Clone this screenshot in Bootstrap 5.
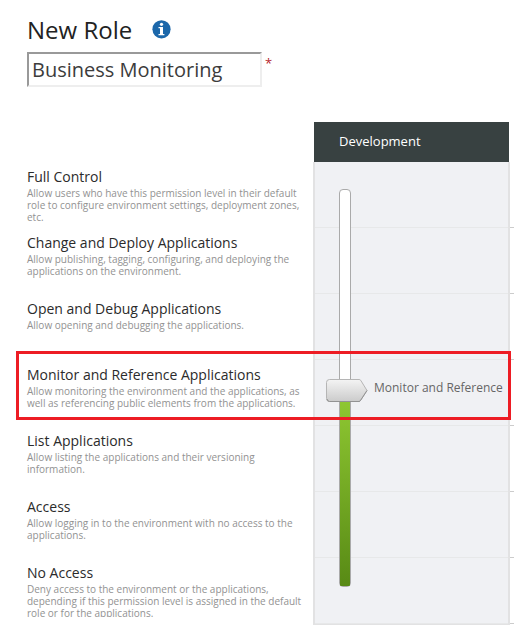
<!DOCTYPE html>
<html lang="en">
<head>
<meta charset="utf-8">
<meta name="viewport" content="width=device-width, initial-scale=1">
<title>New Role</title>
<link href="https://cdn.jsdelivr.net/npm/bootstrap@5.3.0/dist/css/bootstrap.min.css" rel="stylesheet">
<style>
body { font-family: "Open Sans", sans-serif; color: #333; width: 527px; height: 630px; overflow: hidden; }
.page-head { height: 122px; padding: 13px 0 0 27px; }
.role-title { font-size: 24px; line-height: 34px; font-weight: 400; color: #222; }
.info-icon { margin: 7px 0 0 20px; }
.name-line { margin-top: 5px; }
.role-name { width: 235px; height: 35px; border: 2px solid; border-color: #999 #eee #eee #999; border-radius: 0; padding: 0 3px; font-size: 20px; font-weight: 400; line-height: 30px; color: #3c3c3c; background: #fff; }
.required-mark { color: #b5232b; font-size: 13px; line-height: 20px; margin-left: 3px; margin-top: 1px; }
.levels { width: 313px; height: 495px; padding: 40px 0 0 27px; overflow: hidden; }
.level { height: 66px; padding-top: 5px; }
.level-name { font-size: 14px; line-height: 20px; font-weight: 400; color: #2b2b2b; }
.level-name span { display: block; height: 20px; line-height: 19px; }
.level-text { font-size: 10px; line-height: 12px; color: #929292; white-space: nowrap; }
.env { width: 201px; }
.env-head { width: 195px; height: 40px; margin-left: 1px; padding-left: 25px; background: #384141; color: #fff; font-size: 13px; line-height: 39px; }
.env-body { width: 197px; height: 463px; background: #f0f1f4; border: 2px solid #e2e2e3; border-top: 0; }
.tick { height: 66px; border-bottom: 1px solid #e7e8e9; }
.tick::after { content: ""; position: absolute; right: -6px; bottom: -1px; width: 4px; height: 1px; background: #ccc; }
.track { left: 24px; top: 27px; width: 12px; height: 398px; background: #fff; border: 1px solid #aaa; border-radius: 4px; }
.track-fill { left: 0; bottom: 0; width: 10px; height: 188px; background: linear-gradient(#8fc832, #588a15); border-radius: 0 0 1px 1px; }
.handle { left: 11px; top: 216px; }
.handle-label { left: 59px; top: 217px; font-size: 12px; line-height: 18px; color: #666; }
.highlight { left: 16px; top: 351px; width: 495px; height: 69px; border: 3px solid #ed1c24; }
</style>
</head>
<body class="bg-white position-relative">
<header class="page-head">
  <div class="d-flex align-items-start">
    <h1 class="role-title m-0">New Role</h1>
    <svg class="info-icon" width="19" height="19" viewBox="0 0 19 19" aria-label="Info">
      <circle cx="9.5" cy="9.3" r="9.1" fill="#1b67aa"/>
      <circle cx="9.5" cy="4.3" r="1.6" fill="#fff"/>
      <path d="M6.500 7H11v7h1.400v1.200H6.500V14H8V8.200H6.500z" fill="#fff"/>
    </svg>
  </div>
  <div class="name-line d-flex align-items-start">
    <input class="role-name" type="text" value="Business Monitoring" aria-label="Role name">
    <span class="required-mark">*</span>
  </div>
</header>
<main class="d-flex align-items-start">
  <section class="levels flex-shrink-0">
    <div class="level"><h2 class="level-name m-0"><span>Full Control</span></h2><p class="level-text m-0">Allow users who have this permission level in their default<br>role to configure environment settings, deployment zones,<br>etc.</p></div>
    <div class="level"><h2 class="level-name m-0"><span>Change and Deploy Applications</span></h2><p class="level-text m-0">Allow publishing, tagging, configuring, and deploying the<br>applications on the environment.</p></div>
    <div class="level"><h2 class="level-name m-0"><span>Open and Debug Applications</span></h2><p class="level-text m-0">Allow opening and debugging the applications.</p></div>
    <div class="level"><h2 class="level-name m-0"><span>Monitor and Reference Applications</span></h2><p class="level-text m-0">Allow monitoring the environment and the applications, as<br>well as referencing public elements from the applications.</p></div>
    <div class="level"><h2 class="level-name m-0"><span>List Applications</span></h2><p class="level-text m-0">Allow listing the applications and their versioning<br>information.</p></div>
    <div class="level"><h2 class="level-name m-0"><span>Access</span></h2><p class="level-text m-0">Allow logging in to the environment with no access to the<br>applications.</p></div>
    <div class="level"><h2 class="level-name m-0"><span>No Access</span></h2><p class="level-text m-0">Deny access to the environment or the applications,<br>depending if this permission level is assigned in the default<br>role or for the applications.</p></div>
  </section>
  <section class="env flex-shrink-0">
    <div class="env-head">Development</div>
    <div class="env-body position-relative">
      <div class="tick position-relative"></div><div class="tick position-relative"></div><div class="tick position-relative"></div><div class="tick position-relative"></div><div class="tick position-relative"></div><div class="tick position-relative"></div><div class="tick position-relative"></div>
      <div class="track position-absolute"><div class="track-fill position-absolute"></div></div>
      <svg class="handle position-absolute" width="43" height="26" viewBox="0 0 43 26">
        <defs><linearGradient id="metal" x1="0" y1="0" x2="0" y2="1"><stop offset="0" stop-color="#f4f4f4"/><stop offset="1" stop-color="#cbcbcb"/></linearGradient></defs>
        <path d="M3.500 1.500H33q1 0 1.700.8L41 12.500l-6.300 9.700q-.7 1.300-1.700 1.300H3.500q-3 0-3-3v-16q0-3 3-3z" fill="url(#metal)" stroke="#b5b5b5"/>
        <path d="M1 21q.5 2.500 2.500 2.500H33q1 0 1.700-1.300L41 12.500" fill="none" stroke="#929292"/>
      </svg>
      <span class="handle-label position-absolute text-nowrap">Monitor and Reference</span>
    </div>
  </section>
</main>
<div class="highlight position-absolute"></div>
<script src="https://cdn.jsdelivr.net/npm/bootstrap@5.3.0/dist/js/bootstrap.bundle.min.js"></script>
</body>
</html>
